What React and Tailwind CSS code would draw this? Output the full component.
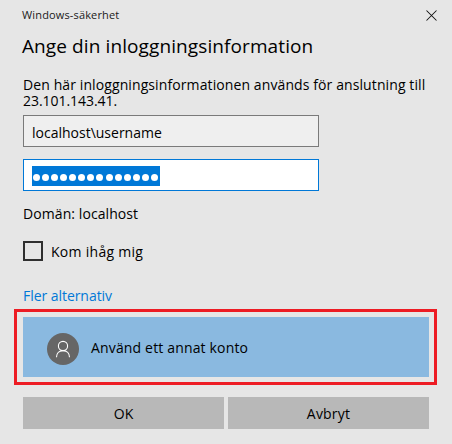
const DOTS = Array.from({ length: 14 }, (_, i) => i);

function CloseIcon() {
  return (
    <svg width="11" height="11" viewBox="0 0 11 11" fill="none" stroke="#111" strokeWidth="1.05">
      <path d="M0.5 0.5 10.5 10.5M10.5 0.5 0.5 10.5" />
    </svg>
  );
}

function UserIcon() {
  return (
    <svg width="32" height="32" viewBox="0 0 32 32" fill="none" className="shrink-0">
      <circle cx="16" cy="16" r="16" fill="#666" />
      <g stroke="#fff" strokeWidth="1.1">
        <circle cx="16" cy="13" r="4.6" />
        <path d="M9.5 24.2C9.5 20.2 12.3 17.6 16 17.6S22.5 20.2 22.5 24.2" />
      </g>
    </svg>
  );
}

export default function App() {
  return (
    <div className="flex h-[444px] w-[452px] flex-col overflow-hidden bg-[#e6e6e6] font-['Open_Sans','Noto_Sans',sans-serif] text-[14px] text-black">
      <header className="flex h-[30px] shrink-0 items-center justify-between pr-[15px] pl-[22px] text-[11px] whitespace-nowrap">
        <span className="tracking-[0.15px] text-[#1a1a1a]">Windows-säkerhet</span>
        <button className="flex" aria-label="Stäng"><CloseIcon /></button>
      </header>
      <h1 className="h-8 shrink-0 pl-[22px] text-[19px] leading-8 tracking-[0.1px] whitespace-nowrap">Ange din inloggningsinformation</h1>
      <div className="mt-[15px] h-8 shrink-0 pl-[23px] leading-4 whitespace-nowrap">
        <p className="tracking-[0.1px]">Den här inloggningsinformationen används för anslutning till</p>
        <p className="tracking-[-0.05px]">23.101.143.41.</p>
      </div>
      <div className="mt-1.5 ml-[23px] flex h-8 w-[296px] shrink-0 items-center border border-[#7a7a7a] bg-[#efefef] pt-[3px] pl-2">
        <span>localhost\username</span>
      </div>
      <div className="mt-3 ml-[23px] flex h-8 w-[296px] shrink-0 items-start border border-[#0078d7] bg-white pt-1.5 pl-2">
        <div className="flex h-5 w-32 items-center justify-between bg-[#0078d7] pt-[3px] pr-[2px] pl-[1px]">
          {DOTS.map((i) => (
            <span key={i} className="size-[7px] rounded-full bg-white" />
          ))}
        </div>
      </div>
      <div className="mt-[13px] h-5 shrink-0 pl-[23px] leading-5 tracking-[0.08px]">Domän: localhost</div>
      <label className="mt-[17px] ml-[23px] flex h-5 shrink-0 items-center gap-2">
        <span className="size-5 border-2 border-[#2f2f2f]" />
        <span className="tracking-[0.28px]">Kom ihåg mig</span>
      </label>
      <a className="mt-[25px] h-[23px] shrink-0 pl-[23px] leading-5 tracking-[-0.05px] text-[#0078d7]">Fler alternativ</a>
      <div className="ml-[14px] h-[76px] w-[423px] shrink-0 border-3 border-[#ed1c24] px-[5px] pt-[5px] pl-1.5">
        <div className="flex h-[60px] w-[406px] items-center gap-3 bg-[#8ab9e0] pt-1 pl-6">
          <UserIcon />
          <span className="-mt-1 tracking-[0.16px]">Använd ett annat konto</span>
        </div>
      </div>
      <div className="mt-3 ml-[23px] grid w-[406px] shrink-0 grid-cols-2 gap-1">
        <button className="h-8 bg-[#b8b8b8]">OK</button>
        <button className="h-8 bg-[#b8b8b8] tracking-[0.2px]">Avbryt</button>
      </div>
    </div>
  );
}
